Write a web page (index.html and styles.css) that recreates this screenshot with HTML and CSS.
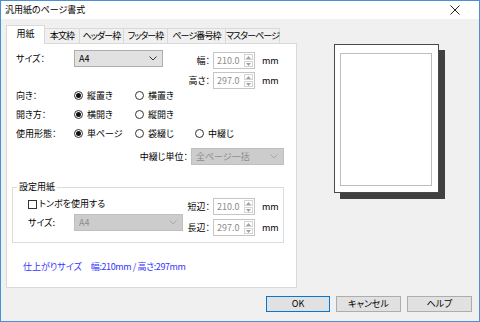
FILE: index.html
```html
<!DOCTYPE html>
<html lang="ja">
<head>
  <meta charset="UTF-8">
  <title>汎用紙のページ書式</title>
  <link rel="stylesheet" href="styles.css">
</head>
<body>
  <div class="window">
    <div class="titlebar">
      <span>汎用紙のページ書式</span>
      <svg class="close" width="10" height="10" viewBox="0 0 10 10"><path d="M0.5 0.5L9.5 9.5M9.5 0.5L0.5 9.5" stroke="#222" stroke-width="1"/></svg>
    </div>

    <div class="content">
      <div class="main">
        <div class="tabview">
          <div class="tabs">
            <div class="tab active">用紙</div>
            <div class="tab">本文枠</div>
            <div class="tab">ヘッダー枠</div>
            <div class="tab">フッター枠</div>
            <div class="tab">ページ番号枠</div>
            <div class="tab">マスターページ</div>
          </div>

          <div class="panel">
            <!-- サイズと幅・高さ -->
            <div class="top-block">
              <div class="row">
                <span class="label">サイズ：</span>
                <div class="select size-select">
                  <span>A4</span>
                  <svg width="8" height="5" viewBox="0 0 8 5"><path d="M0.5 0.5L4 4L7.5 0.5" fill="none" stroke="#333"/></svg>
                </div>
              </div>
              <div class="spins">
                <div class="spin-row">
                  <span class="slabel">幅：</span>
                  <div class="spin">
                    <span class="val">210.0</span>
                    <div class="arrows">
                      <span class="arr"><svg width="5" height="3" viewBox="0 0 5 3"><path d="M0 3L2.5 0L5 3Z" fill="#a0a0a0"/></svg></span>
                      <span class="arr"><svg width="5" height="3" viewBox="0 0 5 3"><path d="M0 0L2.5 3L5 0Z" fill="#a0a0a0"/></svg></span>
                    </div>
                  </div>
                  <span class="unit">mm</span>
                </div>
                <div class="spin-row">
                  <span class="slabel">高さ：</span>
                  <div class="spin">
                    <span class="val">297.0</span>
                    <div class="arrows">
                      <span class="arr"><svg width="5" height="3" viewBox="0 0 5 3"><path d="M0 3L2.5 0L5 3Z" fill="#a0a0a0"/></svg></span>
                      <span class="arr"><svg width="5" height="3" viewBox="0 0 5 3"><path d="M0 0L2.5 3L5 0Z" fill="#a0a0a0"/></svg></span>
                    </div>
                  </div>
                  <span class="unit">mm</span>
                </div>
              </div>
            </div>

            <div class="opt-row">
              <span>向き：</span>
              <span class="radio on"><i></i>縦置き</span>
              <span class="radio"><i></i>横置き</span>
            </div>
            <div class="opt-row">
              <span>開き方：</span>
              <span class="radio on"><i></i>横開き</span>
              <span class="radio"><i></i>縦開き</span>
            </div>
            <div class="opt-row">
              <span>使用形態：</span>
              <span class="radio on"><i></i>単ページ</span>
              <span class="radio"><i></i>袋綴じ</span>
              <span class="radio"><i></i>中綴じ</span>
            </div>

            <div class="bind-row">
              <span>中綴じ単位：</span>
              <div class="select disabled bind-select">
                <span>全ページ一括</span>
                <svg width="8" height="5" viewBox="0 0 8 5"><path d="M0.5 0.5L4 4L7.5 0.5" fill="none" stroke="#a8a8a8"/></svg>
              </div>
            </div>

            <fieldset class="group">
              <legend>設定用紙</legend>
              <div class="group-body">
                <div class="group-left">
                  <div class="check-row"><i class="check"></i>トンボを使用する</div>
                  <div class="row">
                    <span class="glabel">サイズ:</span>
                    <div class="select disabled group-select">
                      <span>A4</span>
                      <svg width="8" height="5" viewBox="0 0 8 5"><path d="M0.5 0.5L4 4L7.5 0.5" fill="none" stroke="#a8a8a8"/></svg>
                    </div>
                  </div>
                </div>
                <div class="spins group-spins">
                  <div class="spin-row">
                    <span class="slabel narrow">短辺：</span>
                    <div class="spin">
                      <span class="val">210.0</span>
                      <div class="arrows">
                        <span class="arr"><svg width="5" height="3" viewBox="0 0 5 3"><path d="M0 3L2.5 0L5 3Z" fill="#a0a0a0"/></svg></span>
                        <span class="arr"><svg width="5" height="3" viewBox="0 0 5 3"><path d="M0 0L2.5 3L5 0Z" fill="#a0a0a0"/></svg></span>
                      </div>
                    </div>
                    <span class="unit">mm</span>
                  </div>
                  <div class="spin-row">
                    <span class="slabel narrow">長辺：</span>
                    <div class="spin">
                      <span class="val">297.0</span>
                      <div class="arrows">
                        <span class="arr"><svg width="5" height="3" viewBox="0 0 5 3"><path d="M0 3L2.5 0L5 3Z" fill="#a0a0a0"/></svg></span>
                        <span class="arr"><svg width="5" height="3" viewBox="0 0 5 3"><path d="M0 0L2.5 3L5 0Z" fill="#a0a0a0"/></svg></span>
                      </div>
                    </div>
                    <span class="unit">mm</span>
                  </div>
                </div>
              </div>
            </fieldset>

            <div class="finish"><span>仕上がりサイズ</span><span class="finish-val">幅:210mm / 高さ:297mm</span></div>
          </div>
        </div>

        <!-- プレビュー -->
        <div class="preview">
          <div class="page"><div class="margin"></div></div>
        </div>
      </div>

      <div class="buttons">
        <button class="btn default">OK</button>
        <button class="btn">キャンセル</button>
        <button class="btn">ヘルプ</button>
      </div>
    </div>
  </div>
</body>
</html>
```

FILE: styles.css
```css
* { box-sizing: border-box; }
body { margin: 0; font-family: "Noto Sans CJK JP", sans-serif; font-size: 9px; line-height: 12px; color: #000; font-feature-settings: "palt"; }

.window { width: 480px; height: 322px; border: 1px solid #4a90d9; background: #f0f0f0; display: flex; flex-direction: column; }
.titlebar { height: 18px; background: #fff; display: flex; align-items: center; justify-content: space-between; padding: 0 19px 0 4px; }

.content { padding: 6px 7px 0 5px; }
.main { display: flex; }

/* タブ */
.tabview { width: 291px; flex-shrink: 0; }
.tabs { display: flex; align-items: flex-end; height: 18px; }
.tab { flex-shrink: 0; white-space: nowrap; height: 15px; padding: 0; letter-spacing: -0.9px; border: 1px solid #d9d9d9; border-bottom: none; margin-left: -1px; background: #f0f0f0; display: flex; align-items: center; justify-content: center; }
.tab:nth-child(2) { width: 36px; }
.tab:nth-child(3) { width: 45px; }
.tab:nth-child(4) { width: 45px; }
.tab:nth-child(5) { width: 59px; }
.tab:nth-child(6) { width: 55px; }
.tab.active { width: 39px; height: 19px; padding-top: 2px; letter-spacing: 0; margin-left: 0; margin-bottom: -1px; background: #fff; position: relative; z-index: 1; align-items: flex-start; }

.panel { height: 245px; background: #fff; border: 1px solid #d9d9d9; padding: 6px 12px 0 5px; }

.row { display: flex; align-items: center; height: 17px; }
.label { width: 58px; }
.glabel { width: 46px; }

.select { display: flex; align-items: center; justify-content: space-between; height: 17px; border: 1px solid #adadad; background: #e1e1e1; padding: 0 5px 0 4px; }
.select.disabled { background: #cccccc; border-color: #bfbfbf; color: #8d8d8d; }
.size-select { width: 89px; }
.bind-select { width: 93px; margin-left: 3px; }
.group-select { width: 109px; }

.top-block { display: flex; height: 36px; padding-left: 4px; }
.spins { display: flex; flex-direction: column; gap: 3px; margin-left: 17px; margin-top: 2px; }
.spin-row { display: flex; align-items: center; height: 17px; }
.slabel { width: 30px; text-align: right; }
.slabel.narrow { width: 27px; }
.spin { display: flex; width: 42px; height: 17px; margin-left: 3px; border: 1px solid #c5c5c5; background: #fff; }
.spin .val { flex: 1; padding-left: 3px; line-height: 15px; color: #8c8c8c; }
.arrows { width: 10px; display: flex; flex-direction: column; gap: 1px; padding: 1px 1px 1px 0; }
.arr { flex: 1; border: 1px solid #d4d4d4; display: flex; align-items: center; justify-content: center; }
.unit { margin-left: 7px; }

/* ラジオボタン */
.opt-row { display: grid; grid-template-columns: 58px 61px 60px auto; align-items: center; height: 19px; padding-left: 4px; }
.radio { display: flex; align-items: center; }
.radio i { width: 9px; height: 9px; border: 1px solid #333; border-radius: 50%; margin-right: 4px; display: flex; align-items: center; justify-content: center; background: #fff; }
.radio.on i::after { content: ""; width: 5px; height: 5px; border-radius: 50%; background: #111; }

.bind-row { display: flex; justify-content: flex-end; align-items: center; height: 17px; margin-top: 5px; }

/* 設定用紙 */
.group { margin: 16px 0 0; padding: 0 0 6px 0; border: 1px solid #dcdcdc; min-width: 0; }
.group legend { margin-left: 4px; padding: 0 2px; line-height: 12px; }
.group-body { display: flex; padding-left: 15px; }
.group-left { width: 155px; }
.check-row { display: flex; align-items: center; height: 16px; margin-top: 3px; margin-bottom: 2px; }
.check { width: 9px; height: 9px; border: 1px solid #333; background: #fff; margin-right: 2px; }
.group-spins { margin-left: 0; margin-top: 5px; gap: 4px; }

.finish { margin-top: 18px; padding-left: 11px; color: #3333ff; }
.finish-val { margin-left: 9px; letter-spacing: -0.4px; }

/* プレビュー */
.preview { margin-left: 37px; margin-top: 19px; }
.page { width: 105px; height: 149px; border: 1px solid #4a4a4a; background: #fff; box-shadow: 6px 6px 0 #404040; padding: 8px 6px 6px 5px; }
.margin { height: 100%; border: 1px solid #bdbdbd; }

/* ボタン */
.buttons { display: flex; justify-content: flex-end; gap: 6px; margin-top: 8px; }
.btn { width: 65px; height: 16px; padding: 0; font: inherit; font-feature-settings: "palt"; line-height: 14px; background: #e1e1e1; border: 1px solid #adadad; color: #000; }
.btn.default { width: 64px; border-color: #0078d7; }
```
